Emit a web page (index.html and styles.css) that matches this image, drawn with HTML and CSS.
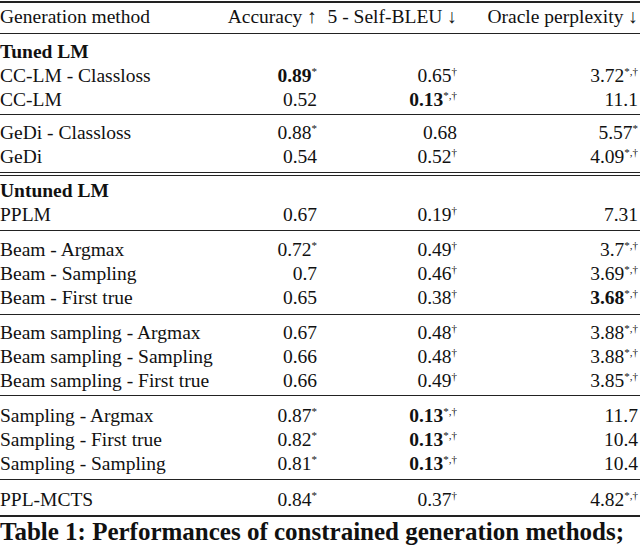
FILE: index.html
```html
<!DOCTYPE html>
<html>
<head>
<meta charset="utf-8">
<link rel="stylesheet" href="styles.css">
</head>
<body>
<div class="page">
  <div class="tbl">
    <div class="row head">
      <span class="c1">Generation method</span>
      <span class="num">Accuracy ↑</span>
      <span class="num">5 - Self-BLEU ↓</span>
      <span class="num">Oracle perplexity ↓</span>
    </div>

    <div class="group g-tuned">
      <div class="row"><span class="c1 b">Tuned LM</span></div>
      <div class="row"><span class="c1">CC-LM - Classloss</span><span class="num"><b>0.89</b><sup>*</sup></span><span class="num">0.65<sup>†</sup></span><span class="num">3.72<sup>*,†</sup></span></div>
      <div class="row"><span class="c1">CC-LM</span><span class="num">0.52</span><span class="num"><b>0.13</b><sup>*,†</sup></span><span class="num">11.1</span></div>
    </div>

    <div class="group g-gedi">
      <div class="row"><span class="c1">GeDi - Classloss</span><span class="num">0.88<sup>*</sup></span><span class="num">0.68</span><span class="num">5.57<sup>*</sup></span></div>
      <div class="row"><span class="c1">GeDi</span><span class="num">0.54</span><span class="num">0.52<sup>†</sup></span><span class="num">4.09<sup>*,†</sup></span></div>
    </div>

    <div class="group g-untuned">
      <div class="row"><span class="c1 b">Untuned LM</span></div>
      <div class="row"><span class="c1">PPLM</span><span class="num">0.67</span><span class="num">0.19<sup>†</sup></span><span class="num">7.31</span></div>
    </div>

    <div class="group g-beam">
      <div class="row"><span class="c1">Beam - Argmax</span><span class="num">0.72<sup>*</sup></span><span class="num">0.49<sup>†</sup></span><span class="num">3.7<sup>*,†</sup></span></div>
      <div class="row"><span class="c1">Beam - Sampling</span><span class="num">0.7</span><span class="num">0.46<sup>†</sup></span><span class="num">3.69<sup>*,†</sup></span></div>
      <div class="row"><span class="c1">Beam - First true</span><span class="num">0.65</span><span class="num">0.38<sup>†</sup></span><span class="num"><b>3.68</b><sup>*,†</sup></span></div>
    </div>

    <div class="group g-bs">
      <div class="row"><span class="c1">Beam sampling - Argmax</span><span class="num">0.67</span><span class="num">0.48<sup>†</sup></span><span class="num">3.88<sup>*,†</sup></span></div>
      <div class="row"><span class="c1">Beam sampling - Sampling</span><span class="num">0.66</span><span class="num">0.48<sup>†</sup></span><span class="num">3.88<sup>*,†</sup></span></div>
      <div class="row"><span class="c1">Beam sampling - First true</span><span class="num">0.66</span><span class="num">0.49<sup>†</sup></span><span class="num">3.85<sup>*,†</sup></span></div>
    </div>

    <div class="group g-samp">
      <div class="row"><span class="c1">Sampling - Argmax</span><span class="num">0.87<sup>*</sup></span><span class="num"><b>0.13</b><sup>*,†</sup></span><span class="num">11.7</span></div>
      <div class="row"><span class="c1">Sampling - First true</span><span class="num">0.82<sup>*</sup></span><span class="num"><b>0.13</b><sup>*,†</sup></span><span class="num">10.4</span></div>
      <div class="row"><span class="c1">Sampling - Sampling</span><span class="num">0.81<sup>*</sup></span><span class="num"><b>0.13</b><sup>*,†</sup></span><span class="num">10.4</span></div>
    </div>

    <div class="group g-mcts">
      <div class="row"><span class="c1">PPL-MCTS</span><span class="num">0.84<sup>*</sup></span><span class="num">0.37<sup>†</sup></span><span class="num">4.82<sup>*,†</sup></span></div>
    </div>
  </div>
  <div class="caption">Table 1: Performances of constrained generation methods;</div>
</div>
</body>
</html>
```

FILE: styles.css
```css
html, body {
  margin: 0;
  padding: 0;
  background: #ffffff;
}

body {
  font-family: "Liberation Serif", "Times New Roman", serif;
  font-size: 19.5px;
  color: #111111;
  overflow: hidden;
}

.page {
  width: 640px;
  padding-top: 1px;
}

.tbl {
  border-top: 2px solid #222222;
  border-bottom: 2px solid #222222;
  width: 640px;
}

.row {
  display: grid;
  grid-template-columns: 221px 96px 140px 181px;
  height: 24px;
  line-height: 24px;
  white-space: nowrap;
}

.head {
  padding-top: 2px;
  padding-bottom: 4px;
  border-bottom: 1px solid #222222;
}

.c1 {
  text-align: left;
}

.num {
  text-align: right;
}

.b, b {
  font-weight: bold;
}

sup {
  font-size: 11px;
  line-height: 0;
  vertical-align: 7px;
}

.group {
  border-bottom: 1px solid #222222;
}

.g-tuned {
  padding-top: 6px;
  padding-bottom: 2px;
}

.g-gedi {
  padding-top: 6px;
  padding-bottom: 3px;
  margin-bottom: 2px;
}

.g-untuned {
  border-top: 1px solid #222222;
  padding-top: 3px;
  padding-bottom: 3px;
}

.g-beam {
  padding-top: 7px;
  padding-bottom: 4px;
}

.g-bs {
  padding-top: 6px;
  padding-bottom: 2px;
}

.g-samp {
  padding-top: 8px;
  padding-bottom: 3px;
}

.g-mcts {
  border-bottom: none;
  padding-top: 8px;
  padding-bottom: 3px;
}

.caption {
  font-weight: bold;
  font-size: 25px;
  line-height: 30px;
  padding-top: 0;
  white-space: nowrap;
}
```
